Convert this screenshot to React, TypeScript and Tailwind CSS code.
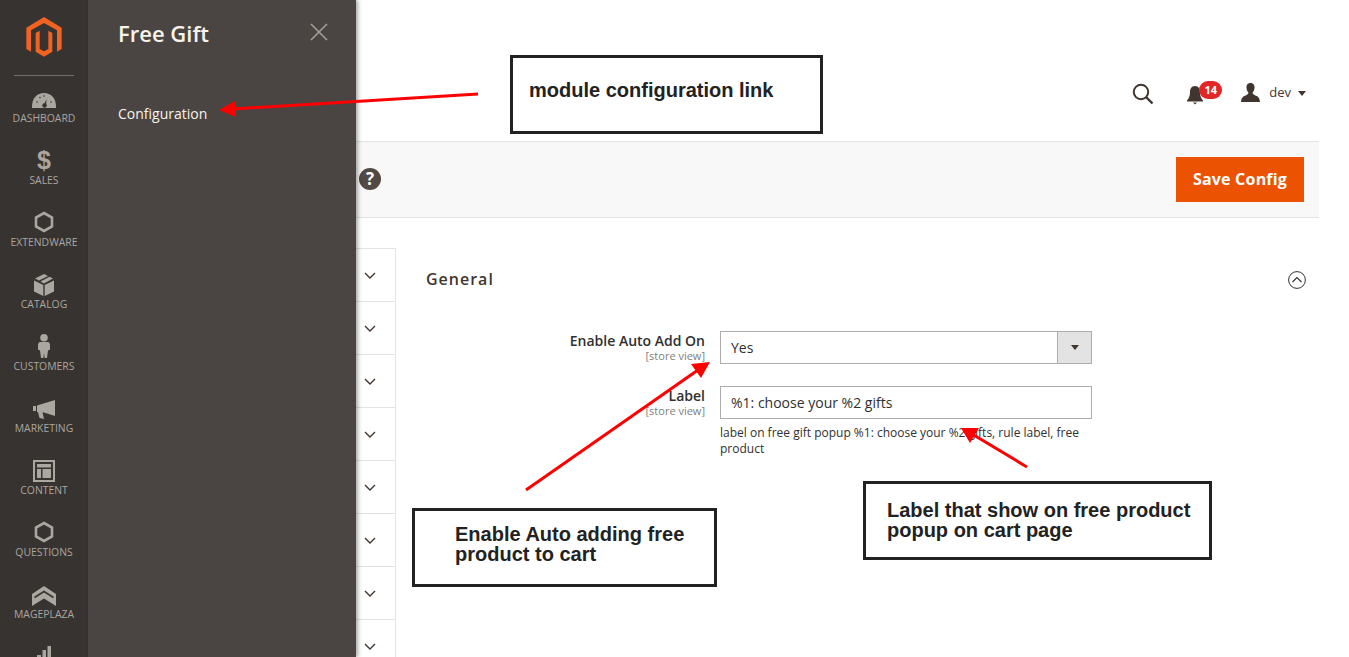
import { ReactNode } from 'react';

const NAV_ICON = 'fill-[#aaa6a0]';

function HexIcon() {
  return (
    <svg width="20" height="24" viewBox="0 0 20 24">
      <path d="M10 3 L18 7.5 V16.5 L10 21 L2 16.5 V7.5 Z" fill="none" stroke="#aaa6a0" strokeWidth="2.6" />
    </svg>
  );
}

const navItems: { label: string; icon: ReactNode }[] = [
  {
    label: 'DASHBOARD',
    icon: (
      <svg width="24" height="20" viewBox="0 0 24 20" className={NAV_ICON}>
        <path d="M0 17 C0 8 5 3 12 3 C19 3 24 8 24 17 V18 H0 Z" />
        <path d="M11 17 L14.5 9 L14 17 Z" fill="#373330" />
        <circle cx="12.5" cy="15.5" r="2.2" fill="#373330" />
        <circle cx="5" cy="12" r="0.8" fill="#373330" />
        <circle cx="8" cy="7.5" r="0.8" fill="#373330" />
        <circle cx="12" cy="6" r="0.8" fill="#373330" />
        <circle cx="19" cy="12" r="0.8" fill="#373330" />
      </svg>
    ),
  },
  {
    label: 'SALES',
    icon: (
      <span className="text-[25px] leading-[24px] font-bold text-[#aaa6a0] font-['Liberation_Sans',sans-serif]">$</span>
    ),
  },
  { label: 'EXTENDWARE', icon: <HexIcon /> },
  {
    label: 'CATALOG',
    icon: (
      <svg width="20" height="22" viewBox="0 0 20 22" className={NAV_ICON}>
        <path d="M0 6.5 L9.3 11 V22 L0 17.5 Z" />
        <path d="M20 6.5 L10.7 11 V22 L20 17.5 Z" />
        <path d="M10 0 L14 2 L5 6.6 L1 4.6 Z" />
        <path d="M15.5 2.8 L19 4.6 L10 9.6 L6.5 7.6 Z" />
      </svg>
    ),
  },
  {
    label: 'CUSTOMERS',
    icon: (
      <svg width="12" height="24" viewBox="0 0 12 24" className={NAV_ICON}>
        <circle cx="6" cy="3.8" r="3.8" />
        <path d="M1.5 8 H10.5 L12 10 V15.5 L10 16.5 L9 24 H6.6 L6 19 L5.4 24 H3 L2 16.5 L0 15.5 V10 Z" />
      </svg>
    ),
  },
  {
    label: 'MARKETING',
    icon: (
      <svg width="22" height="20" viewBox="0 0 22 20" className={NAV_ICON}>
        <path d="M0 6 H3 V11 H0 Z" />
        <path d="M4 5.5 L22 0 V16 L11 12.5 H9.5 L11 19 L6.5 18 L5 12 H4 Z" />
      </svg>
    ),
  },
  {
    label: 'CONTENT',
    icon: (
      <svg width="22" height="22" viewBox="0 0 22 22" className={NAV_ICON}>
        <path fillRule="evenodd" d="M0 0 H22 V22 H0 Z M2 2 V20 H20 V2 Z" />
        <path d="M4 4 H18 V7.5 H4 Z M4 9 H8 V18 H4 Z M9.5 9 H18 V18 H9.5 Z" />
      </svg>
    ),
  },
  { label: 'QUESTIONS', icon: <HexIcon /> },
  {
    label: 'MAGEPLAZA',
    icon: (
      <svg width="24" height="20" viewBox="0 0 24 20" className={NAV_ICON}>
        <path d="M12 0 L24 8 V20 L12 12.5 L0 20 V8 Z" />
        <path d="M2.5 11.5 L12 5.5 L21.5 11.5" fill="none" stroke="#373330" strokeWidth="1.5" />
      </svg>
    ),
  },
];

const tabRows = [0, 1, 2, 3, 4, 5, 6, 7];

function Chevron() {
  return (
    <svg width="12" height="8" viewBox="0 0 12 8">
      <path d="M1 1 L6 6 L11 1" fill="none" stroke="#41362f" strokeWidth="1.4" />
    </svg>
  );
}

function StoreLabel({ title, className }: { title: string; className: string }) {
  return (
    <div className={`w-[285px] text-right ${className}`}>
      <div className="text-[14px] leading-[18px] font-semibold text-[#303030]">{title}</div>
      <div className="text-[11px] leading-[12px] text-[#808080]">[store view]</div>
    </div>
  );
}

function Note({ className, children }: { className: string; children: ReactNode }) {
  return (
    <div
      className={`absolute border-[3px] border-[#222] bg-white font-['Liberation_Sans',Arial,sans-serif] font-bold text-[20px] leading-[20px] text-[#222] ${className}`}
    >
      {children}
    </div>
  );
}

export default function App() {
  return (
    <div className="relative flex w-[1349px] h-[657px] overflow-hidden bg-white font-['Open_Sans',sans-serif]">
      {/* main menu */}
      <nav className="w-[88px] shrink-0 bg-[#373330] flex flex-col items-center">
        <svg width="36" height="40" viewBox="80 52 106 120" className="mt-[17px] shrink-0">
          <path
            fill="#f26322"
            d="M133 52 L186 84 V148 L172 156 V92 L133 70 L94 92 V156 L80 148 V84 Z"
          />
          <path fill="#f26322" d="M108 100 L120 93 V148 L133 155 L146 148 V93 L158 100 V156 L133 171 L108 156 Z" />
        </svg>
        <div className="w-[60px] h-px bg-[#736e68] mt-[18px] mb-[10px] shrink-0" />
        {navItems.map((item) => (
          <div key={item.label} className="h-[62px] w-full flex flex-col items-center shrink-0">
            <div className="h-[24px] flex items-end justify-center">{item.icon}</div>
            <div className="text-[10.4px] leading-[14px] mt-[1px] text-[#aaa6a0]">{item.label}</div>
          </div>
        ))}
        <svg width="14" height="14" viewBox="0 0 14 14" className={`${NAV_ICON} mt-[2px] shrink-0`}>
          <path d="M0 9 H4 V14 H0 Z M5.5 4 H9 V14 H5.5 Z M10.5 0 H14 V14 H10.5 Z" />
        </svg>
      </nav>

      {/* sub menu */}
      <aside className="relative z-10 w-[268px] shrink-0 bg-[#4a4542] shadow-[2px_0_4px_rgba(0,0,0,0.35)] px-[30px]">
        <div className="mt-[17px] text-[22px] leading-[32px] font-semibold text-[#f7f3eb]">Free Gift</div>
        <div className="mt-[55px] text-[14px] leading-[20px] text-[#f7f3eb]">Configuration</div>
        <svg width="20" height="20" viewBox="0 0 20 20" className="absolute left-[221px] top-[22px]">
          <path d="M2 2 L18 18 M18 2 L2 18" stroke="#a79d95" strokeWidth="1.6" />
        </svg>
      </aside>

      {/* page */}
      <main className="w-[963px] shrink-0 flex flex-col">
        <header className="h-[142px] border-b border-[#e3e3e3] flex justify-end items-start pt-[80px] pr-[13px] shrink-0">
          <svg width="22" height="22" viewBox="0 0 22 22" className="mt-[3px]">
            <circle cx="9" cy="9" r="7.2" fill="none" stroke="#41362f" strokeWidth="2" />
            <path d="M14 14 L20.5 20.5" stroke="#41362f" strokeWidth="2.4" />
          </svg>
          <div className="relative w-[44px] h-[24px] ml-[33px] mt-[1px]">
            <svg width="16" height="19" viewBox="0 0 16 19" className="absolute left-0 top-[5px]">
              <path d="M8 0 C11.5 0 13 3 13 6 C13 10 14 12 16 14.5 V15.5 H0 V14.5 C2 12 3 10 3 6 C3 3 4.5 0 8 0 Z M6 16.5 H10 L8 18.5 Z" fill="#41362f" />
            </svg>
            <span className="absolute left-[12px] top-0 w-[23px] h-[18px] rounded-[9px] bg-[#e22626] text-white text-[11px] leading-[18px] font-bold text-center">
              14
            </span>
          </div>
          <svg width="19" height="19" viewBox="0 0 19 19" className="ml-[10px] mt-[3px]">
            <path d="M9.5 0 C12.5 0 13.8 2.3 13.5 5 C13.3 7 12.5 8.5 11.6 9.6 C11.6 11 12.4 11.6 14 12.3 C16.5 13.4 18.6 14 19 19 H0 C0.4 14 2.5 13.4 5 12.3 C6.6 11.6 7.4 11 7.4 9.6 C6.5 8.5 5.7 7 5.5 5 C5.2 2.3 6.5 0 9.5 0 Z" fill="#41362f" />
          </svg>
          <span className="ml-[9px] mt-[1px] text-[13px] leading-[22px] text-[#41362f]">dev</span>
          <span className="ml-[7px] mt-[11px] w-0 h-0 border-x-[4.5px] border-x-transparent border-t-[5px] border-t-[#41362f]" />
        </header>

        <div className="h-[76px] bg-[#f8f8f8] border-b border-[#e3e3e3] flex items-center justify-between pl-[3px] pr-[15px] shrink-0">
          <span className="w-[22px] h-[22px] rounded-full bg-[#514943] text-white text-[17px] leading-[21px] font-bold text-center -mt-[1px]">?</span>
          <button className="w-[128px] h-[45px] pb-[2px] bg-[#eb5202] text-white text-[16px] font-bold tracking-[0.2px]">
            Save Config
          </button>
        </div>

        <div className="flex flex-1 min-h-0">
          {/* config tabs */}
          <div className="w-[40px] shrink-0 mt-[30px] border-t border-r border-[#e3e3e3]">
            {tabRows.map((row) => (
              <div key={row} className="h-[53px] border-b border-[#e3e3e3] flex items-center pl-[8px] pt-[2px]">
                <Chevron />
              </div>
            ))}
          </div>

          {/* General section */}
          <section className="flex-1 pl-[30px] pr-[13px] pt-[50px]">
            <div className="flex items-start justify-between">
              <h2 className="mt-px text-[16px] leading-[20px] font-semibold tracking-[1px] text-[#41362f]">General</h2>
              <svg width="18" height="18" viewBox="0 0 18 18" className="mt-[3px]">
                <circle cx="9" cy="9" r="8.4" fill="none" stroke="#303030" strokeWidth="1" />
                <path d="M4.5 11 L9 6.5 L13.5 11" fill="none" stroke="#303030" strokeWidth="1.1" />
              </svg>
            </div>
            <div className="mt-[42px] flex ml-[-6px]">
              <StoreLabel title="Enable Auto Add On" className="mt-[1px]" />
              <div className="ml-[15px] w-[372px] h-[33px] border border-[#adadad] flex items-center justify-between pl-[10px] text-[14px] text-[#303030]">
                Yes
                <div className="w-[34px] h-full bg-[#e3e3e3] border-l border-[#adadad] flex items-center justify-center">
                  <span className="w-0 h-0 border-x-[4px] border-x-transparent border-t-[5px] border-t-[#41362f]" />
                </div>
              </div>
            </div>
            <div className="mt-[22px] flex ml-[-6px]">
              <StoreLabel title="Label" className="mt-px" />
              <div className="ml-[15px] w-[372px]">
                <div className="h-[33px] border border-[#adadad] flex items-center pl-[10px] text-[14px] text-[#303030]">
                  %1: choose your %2 gifts
                </div>
                <div className="mt-[6px] text-[12px] leading-[16px] text-[#303030]">
                  label on free gift popup %1: choose your %2 gifts, rule label, free product
                </div>
              </div>
            </div>
          </section>
        </div>
      </main>

      {/* annotations */}
      <Note className="left-[510px] top-[55px] w-[313px] h-[79px] pl-[16px] pt-[22px]">module configuration link</Note>
      <Note className="left-[412px] top-[508px] w-[305px] h-[79px] pl-[40px] pt-[13px]">
        Enable Auto adding free
        <br />
        product to cart
      </Note>
      <Note className="left-[863px] top-[481px] w-[349px] h-[79px] pl-[21px] pt-[16px]">
        Label that show on free product
        <br />
        popup on cart page
      </Note>
      <svg width="1349" height="657" viewBox="0 0 1349 657" className="absolute inset-0 z-20 pointer-events-none">
        <path d="M478 94 L232 109" stroke="#f00" strokeWidth="3" />
        <path d="M219 110 L235 101 L236 117 Z" fill="#f00" />
        <path d="M526 490 L698 370" stroke="#f00" strokeWidth="3" />
        <path d="M710 362 L701 378 L691 364 Z" fill="#f00" />
        <path d="M1027 467 L972 434" stroke="#f00" strokeWidth="3" />
        <path d="M961 428 L979 428 L970 443 Z" fill="#f00" />
      </svg>
    </div>
  );
}
